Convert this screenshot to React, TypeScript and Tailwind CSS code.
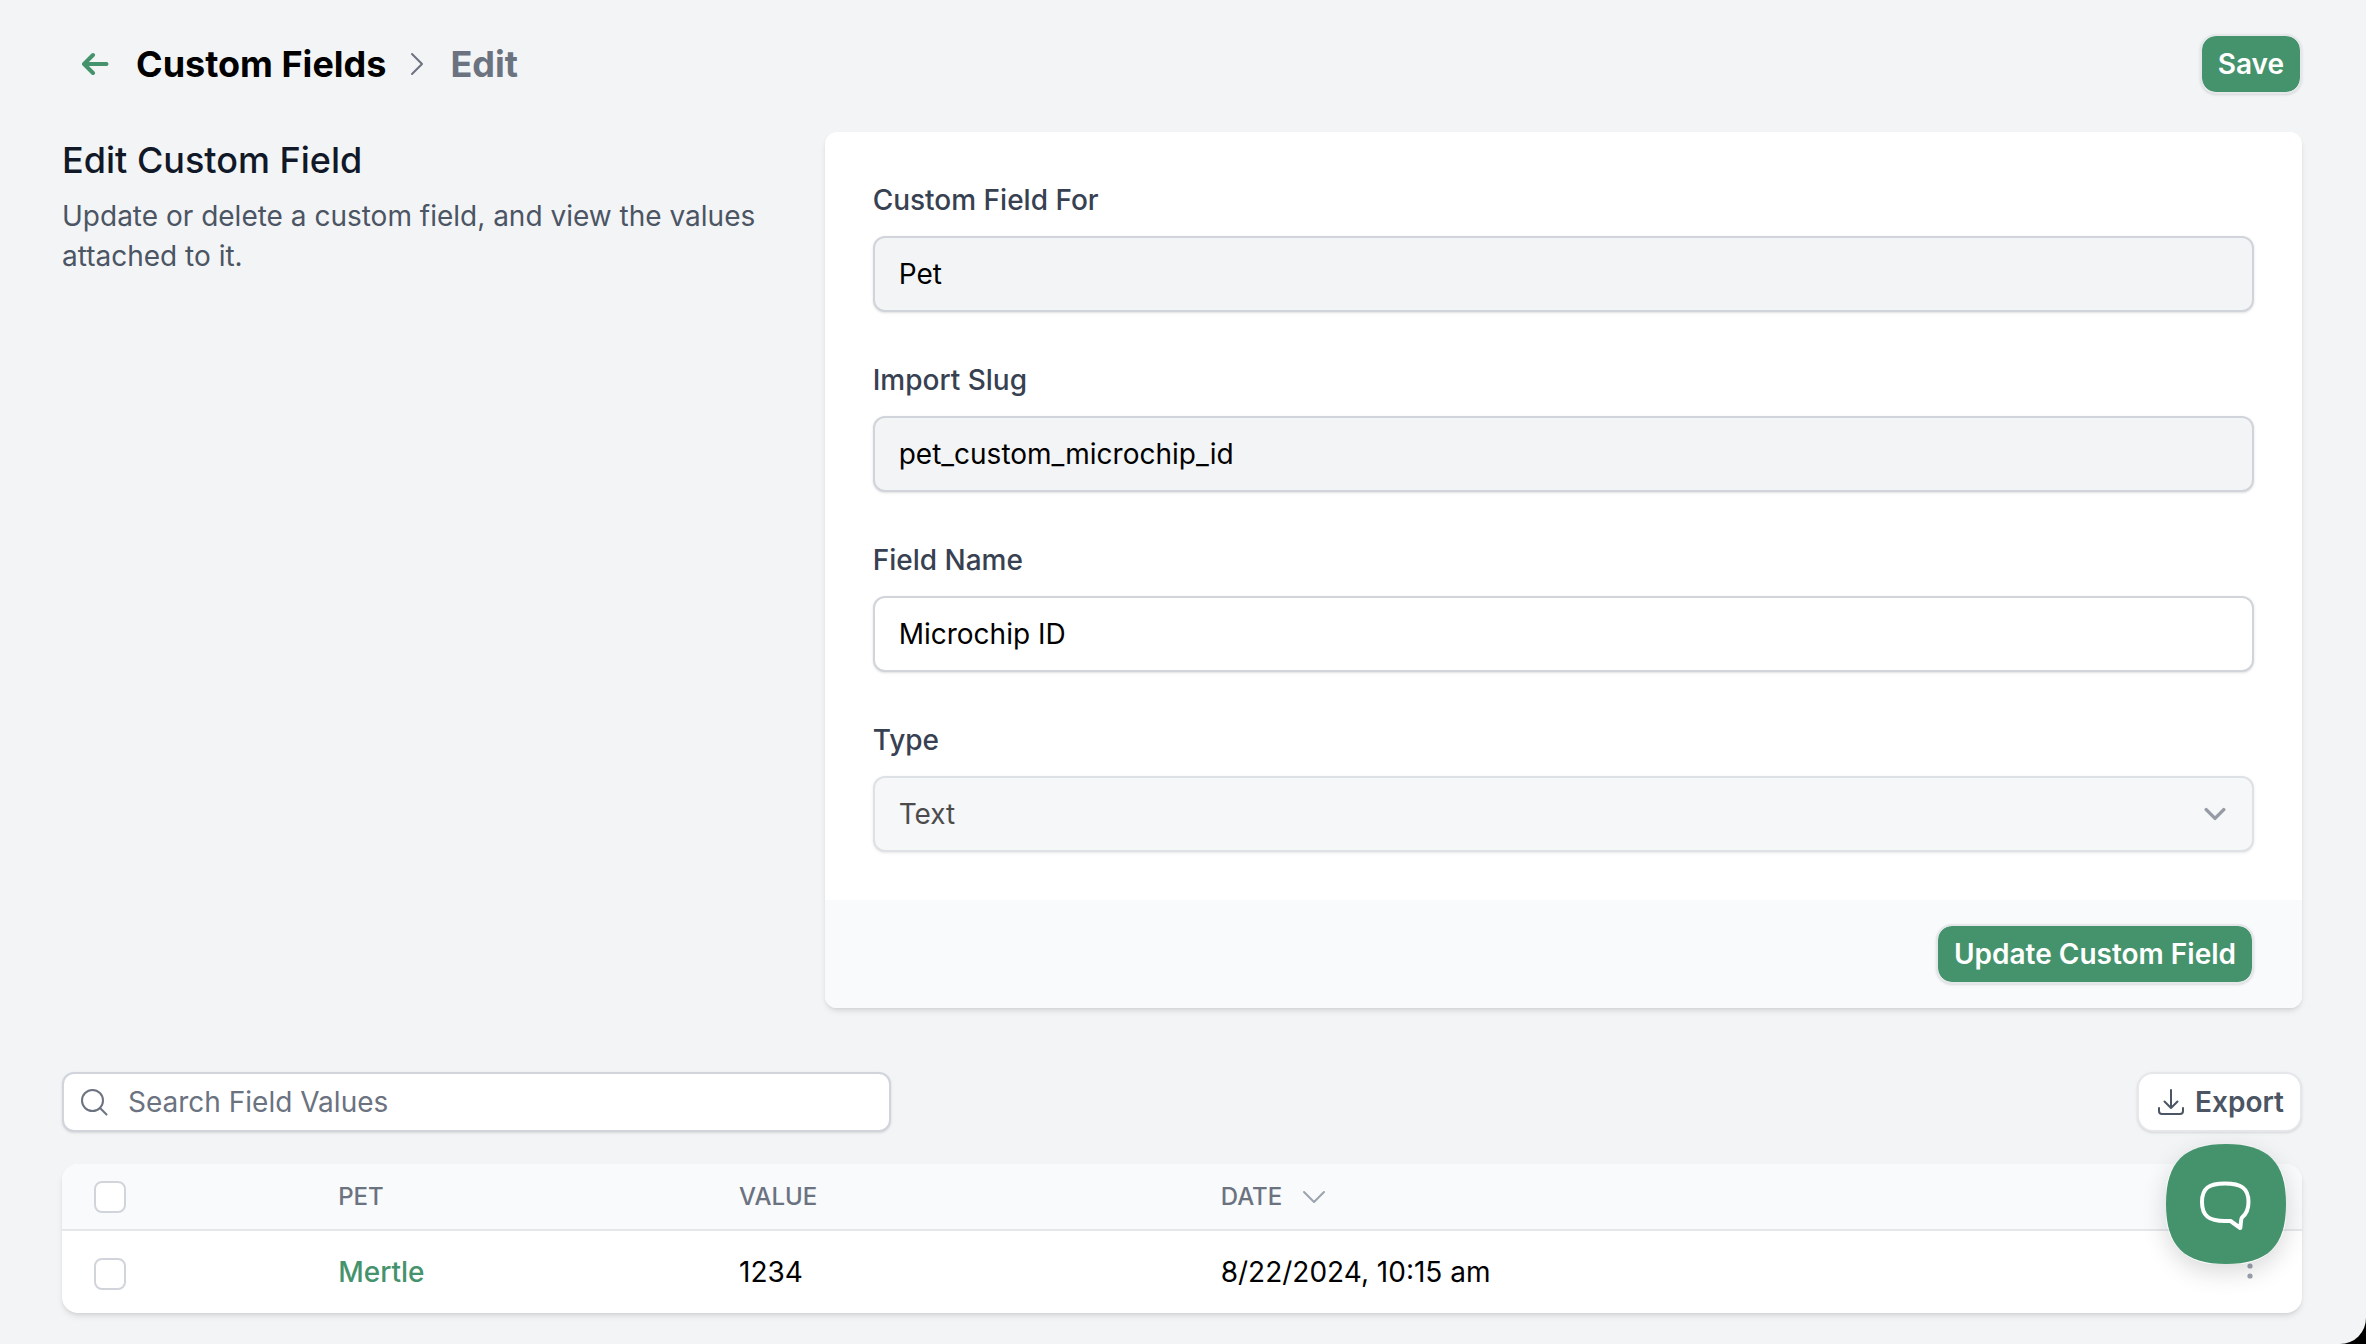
import { useState } from 'react';

const labelClass = 'text-[28px] leading-10 font-medium text-[#374151]';
const inputClass = 'h-[76px] w-full rounded-xl border-2 px-6 text-[28px] leading-10 text-black shadow-sm';
const checkboxClass = 'block size-8 appearance-none rounded-lg border-2 border-[#d1d5db] bg-white';
const primaryButtonClass =
  'flex h-[60px] items-center rounded-2xl border-2 border-[#e5e7eb] bg-[#45936c] bg-clip-padding px-4 text-[28px] leading-10 font-semibold text-white shadow-sm';

function ArrowLeftIcon() {
  return (
    <svg className="h-6 w-7" viewBox="0 0 28 24" fill="none" stroke="currentColor" strokeWidth="4" strokeLinecap="round" strokeLinejoin="round">
      <path d="M24.500 12H2M11 3L2 12l9 9" />
    </svg>
  );
}

function ChevronRightIcon() {
  return (
    <svg className="h-6 w-4" viewBox="0 0 16 24" fill="none" stroke="currentColor" strokeWidth="2" strokeLinecap="round" strokeLinejoin="round">
      <path d="M2 2l10 10L2 22" />
    </svg>
  );
}

function SearchIcon() {
  return (
    <svg className="size-7" viewBox="0 0 28 28" fill="none" stroke="currentColor" strokeWidth="2" strokeLinecap="round">
      <circle cx="12.500" cy="12.500" r="10.500" />
      <path d="M20 20L26.500 26.500" />
    </svg>
  );
}

function ExportIcon() {
  return (
    <svg className="size-7" viewBox="0 0 28 28" fill="none" stroke="currentColor" strokeWidth="2" strokeLinecap="round" strokeLinejoin="round">
      <path d="M14 2v18M7.500 13.500L14 20l6.500-6.500M2 20v3a3 3 0 0 0 3 3h18a3 3 0 0 0 3-3v-3" />
    </svg>
  );
}

function ChevronDownIcon({ className, strokeWidth }: { className: string; strokeWidth: number }) {
  return (
    <svg className={className} viewBox="0 0 24 16" fill="none" stroke="currentColor" strokeWidth={strokeWidth} strokeLinecap="round" strokeLinejoin="round">
      <path d="M2 3l10 10L22 3" />
    </svg>
  );
}

function DotsIcon() {
  return (
    <svg className="h-8 w-2" viewBox="0 0 8 32" fill="currentColor">
      <circle cx="4" cy="6" r="2.600" />
      <circle cx="4" cy="16" r="2.600" />
      <circle cx="4" cy="26" r="2.600" />
    </svg>
  );
}

function ChatIcon() {
  return (
    <svg className="size-[120px]" viewBox="0 0 120 120" fill="none">
      <path d="M60 0C102 0 120 18 120 60S102 120 60 120 0 102 0 60 18 0 60 0Z" fill="#45936c" />
      <path
        d="M59 39.500C75 39.500 82.500 44 82.500 58C82.500 66 80.500 70 76 73.500C74.800 75 75 79 74.300 84L64.500 77H59C43 77 36 72 36 58S43 39.500 59 39.500Z"
        stroke="white"
        strokeWidth="4"
        strokeLinejoin="round"
      />
    </svg>
  );
}

export default function App() {
  const [fieldName, setFieldName] = useState('Microchip ID');
  const [search, setSearch] = useState('');

  return (
    <div className="min-h-screen bg-black font-['Inter',sans-serif]">
      <main className="min-h-screen rounded-br-[26px] bg-[#f3f4f6] px-[62px] pt-[34px] pr-16">
        <header className="flex items-center justify-between">
          <nav className="flex items-center text-[36px] leading-[56px] font-bold" aria-label="Breadcrumb">
            <a href="#back" aria-label="Back" className="mr-[26px] ml-5 text-[#45936c]">
              <ArrowLeftIcon />
            </a>
            <a href="#custom-fields" className="text-black">Custom Fields</a>
            <span className="mx-6 text-[#6b7280]">
              <ChevronRightIcon />
            </span>
            <span className="text-[#6b7280]">Edit</span>
          </nav>
          <button type="button" className={primaryButtonClass}>Save</button>
        </header>

        <div className="mt-[38px] grid grid-cols-3 gap-12">
          <div className="pt-1">
            <h3 className="text-[36px] leading-[48px] font-medium text-[#111827]">Edit Custom Field</h3>
            <p className="mt-3 text-[28px] leading-10 text-[#4b5563]">
              Update or delete a custom field, and view the values attached to it.
            </p>
          </div>

          <form className="col-span-2 overflow-hidden rounded-xl bg-white shadow-md" onSubmit={(e) => e.preventDefault()}>
            <div className="flex flex-col gap-12 p-12">
              <div className="flex flex-col gap-4">
                <label htmlFor="field-for" className={labelClass}>Custom Field For</label>
                <input id="field-for" readOnly value="Pet" className={`${inputClass} border-[#d1d5db] bg-[#f3f4f6]`} />
              </div>
              <div className="flex flex-col gap-4">
                <label htmlFor="slug" className={labelClass}>Import Slug</label>
                <input id="slug" readOnly value="pet_custom_microchip_id" className={`${inputClass} border-[#d1d5db] bg-[#f3f4f6]`} />
              </div>
              <div className="flex flex-col gap-4">
                <label htmlFor="field-name" className={labelClass}>Field Name</label>
                <input
                  id="field-name"
                  value={fieldName}
                  onChange={(e) => setFieldName(e.target.value)}
                  className={`${inputClass} border-[#d1d5db] bg-white`}
                />
              </div>
              <div className="flex flex-col gap-4">
                <label htmlFor="type" className={labelClass}>Type</label>
                <div className="relative opacity-70">
                  <select id="type" disabled className={`${inputClass} appearance-none border-[#d1d5db] bg-[#f3f4f6] opacity-100`}>
                    <option>Text</option>
                  </select>
                  <span className="pointer-events-none absolute inset-y-0 right-7 flex items-center text-[#6b7280]">
                    <ChevronDownIcon className="h-[14px] w-[22px]" strokeWidth={4} />
                  </span>
                </div>
              </div>
            </div>
            <div className="flex justify-end bg-[#f9fafb] px-12 py-6">
              <button type="submit" className={primaryButtonClass}>Update Custom Field</button>
            </div>
          </form>
        </div>

        <div className="mt-16 flex items-center justify-between">
          <div className="relative w-[37%]">
            <span className="pointer-events-none absolute inset-y-0 left-[18px] flex items-center text-[#6b7280]">
              <SearchIcon />
            </span>
            <input
              type="search"
              aria-label="Search Field Values"
              placeholder="Search Field Values"
              value={search}
              onChange={(e) => setSearch(e.target.value)}
              className="h-[60px] w-full rounded-xl border-2 border-[#d1d5db] bg-white pr-6 pl-16 text-[28px] leading-10 text-black shadow-sm placeholder:text-[#6b7280]"
            />
          </div>
          <button
            type="button"
            className="flex h-[60px] items-center gap-2.5 rounded-2xl border-2 border-[#e5e7eb] bg-white pr-4 pl-[18px] text-[28px] leading-10 font-semibold text-[#4b5563] shadow-sm"
          >
            <ExportIcon />
            Export
          </button>
        </div>

        <div className="mt-8 overflow-hidden rounded-2xl bg-white shadow-md">
          <table className="w-full table-fixed text-left">
            <colgroup>
              <col className="w-[10.9%]" />
              <col className="w-[17.9%]" />
              <col className="w-[21.5%]" />
              <col />
              <col className="w-[8%]" />
            </colgroup>
            <thead className="border-b-2 border-[#e5e7eb] bg-[#f9fafb] text-2xl text-[#6b7280]">
              <tr className="h-[66px]">
                <th className="pl-8"><input type="checkbox" aria-label="Select all rows" className={checkboxClass} /></th>
                <th className="pl-8 font-medium">PET</th>
                <th className="pl-8 font-medium">VALUE</th>
                <th className="pl-8 font-medium">
                  <button type="button" className="flex items-center gap-5">
                    DATE
                    <ChevronDownIcon className="h-4 w-6 text-[#9ca3af]" strokeWidth={2} />
                  </button>
                </th>
                <th aria-label="Actions"></th>
              </tr>
            </thead>
            <tbody className="text-[28px] leading-10 text-black">
              <tr className="h-[83px]">
                <td className="pt-1 pl-8"><input type="checkbox" aria-label="Select Mertle" className={checkboxClass} /></td>
                <td className="pl-8"><a href="#mertle" className="font-medium text-[#45936c]">Mertle</a></td>
                <td className="pl-8">1234</td>
                <td className="pl-8">8/22/2024, 10:15 am</td>
                <td className="pb-3">
                  <button type="button" aria-label="Row actions" className="mr-12 ml-auto block text-[#9ca3af]">
                    <DotsIcon />
                  </button>
                </td>
              </tr>
            </tbody>
          </table>
        </div>
      </main>

      <button type="button" aria-label="Open chat" className="fixed right-20 bottom-20 rounded-[48px] shadow-[0_8px_24px_rgba(0,0,0,0.15)]">
        <ChatIcon />
      </button>
    </div>
  );
}
